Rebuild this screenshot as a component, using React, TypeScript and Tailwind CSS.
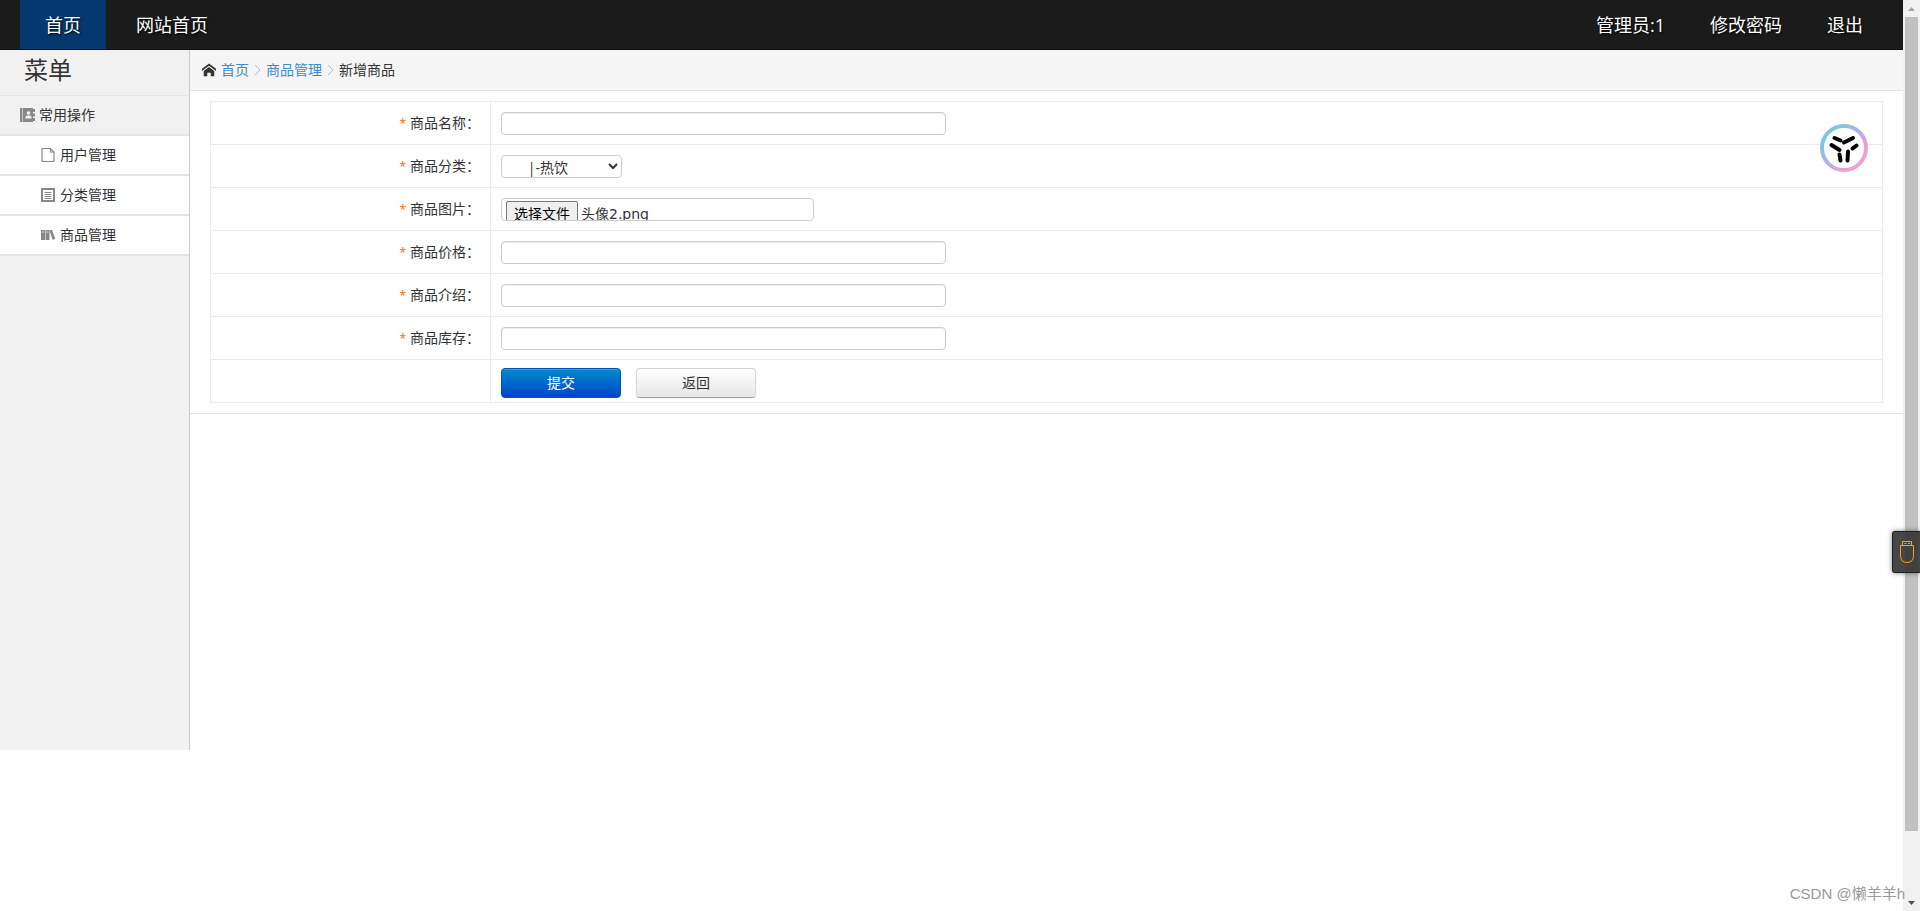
import type { ReactNode } from 'react';
import { ImHome } from 'react-icons/im';

const MENU = [
  { label: '用户管理', icon: <FileIcon /> },
  { label: '分类管理', icon: <ListIcon /> },
  { label: '商品管理', icon: <BooksIcon /> },
];

const CELL = 'border border-[#ebebeb]';
const CONTROL = 'h-[23px] rounded-[4px] border border-[#ccc] bg-white';

function AddressBookIcon() {
  return (
    <svg width="15" height="16" viewBox="0 0 15 16" fill="#888">
      <path d="M0 1h13v14H0zM13 2h2v3h-2zM13 6.500h2v3h-2zM13 11h2v3h-2z" />
      <path d="M2.500 1v14" stroke="#c4c4c4" strokeWidth="1" />
      <circle cx="8.500" cy="6" r="1.800" fill="#f1f1f1" />
      <path d="M5.500 11.500V10q0-1.500 1.500-1.500h3q1.500 0 1.500 1.500v1.500z" fill="#f1f1f1" />
    </svg>
  );
}

function FileIcon() {
  return (
    <svg width="14" height="16" viewBox="0 0 14 16" fill="none" stroke="#888" strokeWidth="1.200">
      <path d="M1 1.500h8.500l3.500 3.500v9.500h-12z" />
      <path d="M9.500 1.500V5H13" />
    </svg>
  );
}

function ListIcon() {
  return (
    <svg width="14" height="16" viewBox="0 0 14 16" fill="none" stroke="#888">
      <path d="M1 2h12v12H1z" strokeWidth="2" />
      <path d="M3.500 5.500h7M3.500 7.500h7M3.500 9.500h7M3.500 11.500h7" />
    </svg>
  );
}

function BooksIcon() {
  return (
    <svg width="14" height="16" viewBox="0 0 14 16" fill="#888">
      <path d="M0 3h4v10H0zM4.500 3h4v10h-4zM8.500 3.600l2.500-.9L14.300 12l-2.600 1z" />
      <path d="M1 5h2M5.500 5h2" stroke="#fff" strokeWidth="0.800" />
    </svg>
  );
}

function Chevron() {
  return (
    <svg width="7" height="12" viewBox="0 0 7 12" fill="none" stroke="#b5c0d6">
      <path d="M1 1l5 5-5 5" />
    </svg>
  );
}

function Row({ id, label, children }: { id: string; label: string; children: ReactNode }) {
  return (
    <tr className="h-[43px]">
      <th className={`${CELL} w-[280px] pr-[10px] text-right font-normal`}>
        <label htmlFor={id}>
          <span className="mr-1 text-[12px] text-[#ff6600]">*</span>
          {label}：
        </label>
      </th>
      <td className={`${CELL} px-[10px]`}>
        <div className="flex items-center">{children}</div>
      </td>
    </tr>
  );
}

function TextField({ id }: { id: string }) {
  return (
    <input
      id={id}
      type="text"
      className={`${CONTROL} w-[445px] px-1 shadow-[inset_0_1px_1px_rgba(0,0,0,0.075)]`}
    />
  );
}

function Header() {
  return (
    <header className="flex h-[50px] items-center justify-between border-b border-[#111] bg-[#1b1b1b] pr-10 pl-5 text-[18px] text-white [text-shadow:1px_1px_2px_#000]">
      <nav className="flex h-full items-center gap-[30px]">
        <a href="#" className="flex h-full items-center bg-[#04386f] px-[25px]">
          首页
        </a>
        <a href="#">网站首页</a>
      </nav>
      <nav className="flex items-center gap-[45px]">
        <a href="#">管理员:1</a>
        <a href="#">修改密码</a>
        <a href="#">退出</a>
      </nav>
    </header>
  );
}

function Sidebar() {
  return (
    <aside className="min-h-[700px] w-[190px] shrink-0 border-r border-[#ccc] bg-[#f1f1f1]">
      <h1 className="h-[46px] border-b border-[#e5e5e5] pl-6 text-[24px] leading-[40px]">菜单</h1>
      <div className="flex h-[40px] items-center gap-1 border-b-2 border-[#e5e5e5] pl-5">
        <AddressBookIcon />
        常用操作
      </div>
      <ul>
        {MENU.map((item) => (
          <li key={item.label} className="h-[40px] border-b-2 border-[#e5e5e5] bg-white">
            <a href="#" className="flex h-full items-center gap-[5px] pl-[41px]">
              {item.icon}
              {item.label}
            </a>
          </li>
        ))}
      </ul>
    </aside>
  );
}

function ProductForm() {
  return (
    <form className="border-b border-[#e5e5e5] pt-[10px] pr-5 pb-[10px] pl-5">
      <table className="w-full border-collapse">
        <tbody>
          <Row id="name" label="商品名称">
            <TextField id="name" />
          </Row>
          <Row id="category" label="商品分类">
            <select id="category" className={`${CONTROL} w-[121px] pt-px`}>
              <option>{'\u00a0\u00a0\u00a0\u00a0\u00a0\u00a0|-热饮'}</option>
            </select>
          </Row>
          <Row id="image" label="商品图片">
            <label className={`${CONTROL} flex w-[313px] items-start gap-[3px] overflow-hidden px-1 pt-[2px]`}>
              <input id="image" type="file" className="sr-only" />
              <span className="rounded-[2px] border border-[#767676] bg-[#efefef] px-[7px] leading-[24px] text-black">
                选择文件
              </span>
              <span className="font-['DejaVu_Sans','Noto_Sans_CJK_SC',sans-serif] leading-[26px]">头像2.png</span>
            </label>
          </Row>
          <Row id="price" label="商品价格">
            <TextField id="price" />
          </Row>
          <Row id="intro" label="商品介绍">
            <TextField id="intro" />
          </Row>
          <Row id="stock" label="商品库存">
            <TextField id="stock" />
          </Row>
          <tr className="h-[43px]">
            <td className={CELL} />
            <td className={`${CELL} px-[10px] pt-1`}>
              <div className="flex items-center gap-[15px]">
                <button
                  type="submit"
                  className="h-[30px] w-[120px] rounded-[4px] border border-[#0055b8] bg-linear-to-b from-[#0088cc] to-[#0044cc] text-white shadow-[inset_0_1px_0_rgba(255,255,255,0.2)]"
                >
                  提交
                </button>
                <button
                  type="button"
                  className="h-[30px] w-[120px] rounded-[4px] border border-[#d5d5d5] border-b-[#a2a2a2] bg-linear-to-b from-white to-[#e6e6e6] shadow-[0_1px_2px_rgba(0,0,0,0.05)]"
                >
                  返回
                </button>
              </div>
            </td>
          </tr>
        </tbody>
      </table>
    </form>
  );
}

function AssistantBadge() {
  return (
    <button type="button" aria-label="助手" className="absolute top-[124px] right-[52px]">
      <svg width="48" height="48" viewBox="0 0 48 48" fill="none">
        <defs>
          <linearGradient id="ring" x1="0" y1="0" x2="1" y2="1">
            <stop offset="0.2" stopColor="#7cc8de" />
            <stop offset="0.5" stopColor="#b9aee8" />
            <stop offset="0.75" stopColor="#efa0cf" />
          </linearGradient>
        </defs>
        <circle cx="24" cy="24" r="22" fill="#fff" stroke="url(#ring)" strokeWidth="4" />
        <g stroke="#000" strokeWidth="4" strokeLinecap="round">
          <path d="M14.500 14l6 2.500M24 18.500l9-4.500M11.500 21l8 5M32.500 24.500l4-3M19.500 30.500l1 6M28 27.500l-.5 9" />
        </g>
      </svg>
    </button>
  );
}

function UsbTab() {
  return (
    <button
      type="button"
      aria-label="USB"
      className="absolute top-[531px] right-0 flex h-[42px] w-[28px] items-center justify-center rounded-l-[3px] border border-r-0 border-[#222] bg-[#333]/90 shadow-[0_0_5px_rgba(0,0,0,0.5)]"
    >
      <svg width="14" height="22" viewBox="0 0 14 22" fill="none" stroke="#f9a11b">
        <path d="M2.500 4.500v-4h9v4M.5 4.500h13v10q0 7-6.500 7t-6.500-7z" />
        <path d="M4.500 2.500h2M8 2.500h2" />
      </svg>
    </button>
  );
}

function ScrollRail() {
  return (
    <div className="flex w-[17px] shrink-0 flex-col items-center justify-between bg-[#f1f1f1]">
      <div className="flex h-[17px] items-center">
        <svg width="7" height="4" fill="#a3a3a3">
          <path d="M0 4L3.500 0L7 4z" />
        </svg>
      </div>
      <div className="mb-[63px] w-[13px] flex-1 bg-[#c1c1c1]" />
      <div className="flex h-[17px] items-center">
        <svg width="7" height="4" fill="#505050">
          <path d="M0 0L3.500 4L7 0z" />
        </svg>
      </div>
    </div>
  );
}

export default function App() {
  return (
    <div className="relative flex min-h-screen bg-white font-['Open_Sans','Noto_Sans_CJK_SC',sans-serif] text-[14px] leading-[20px] text-[#333]">
      <div className="min-w-0 flex-1">
        <Header />
        <div className="flex items-stretch">
          <Sidebar />
          <main className="min-w-0 flex-1">
            <nav className="flex h-[41px] items-center gap-[5px] border-b border-[#e5e5e5] bg-[#f5f5f5] pl-3">
              <ImHome className="h-[14px] w-[14px]" />
              <a href="#" className="text-[#428bca]">首页</a>
              <Chevron />
              <a href="#" className="text-[#428bca]">商品管理</a>
              <Chevron />
              <span>新增商品</span>
            </nav>
            <ProductForm />
          </main>
        </div>
      </div>
      <ScrollRail />
      <AssistantBadge />
      <UsbTab />
      <p className="absolute right-[15px] bottom-[7px] font-['Liberation_Sans','Noto_Sans_CJK_SC',sans-serif] text-[15px] text-[#999]">
        CSDN @懒羊羊h
      </p>
    </div>
  );
}
